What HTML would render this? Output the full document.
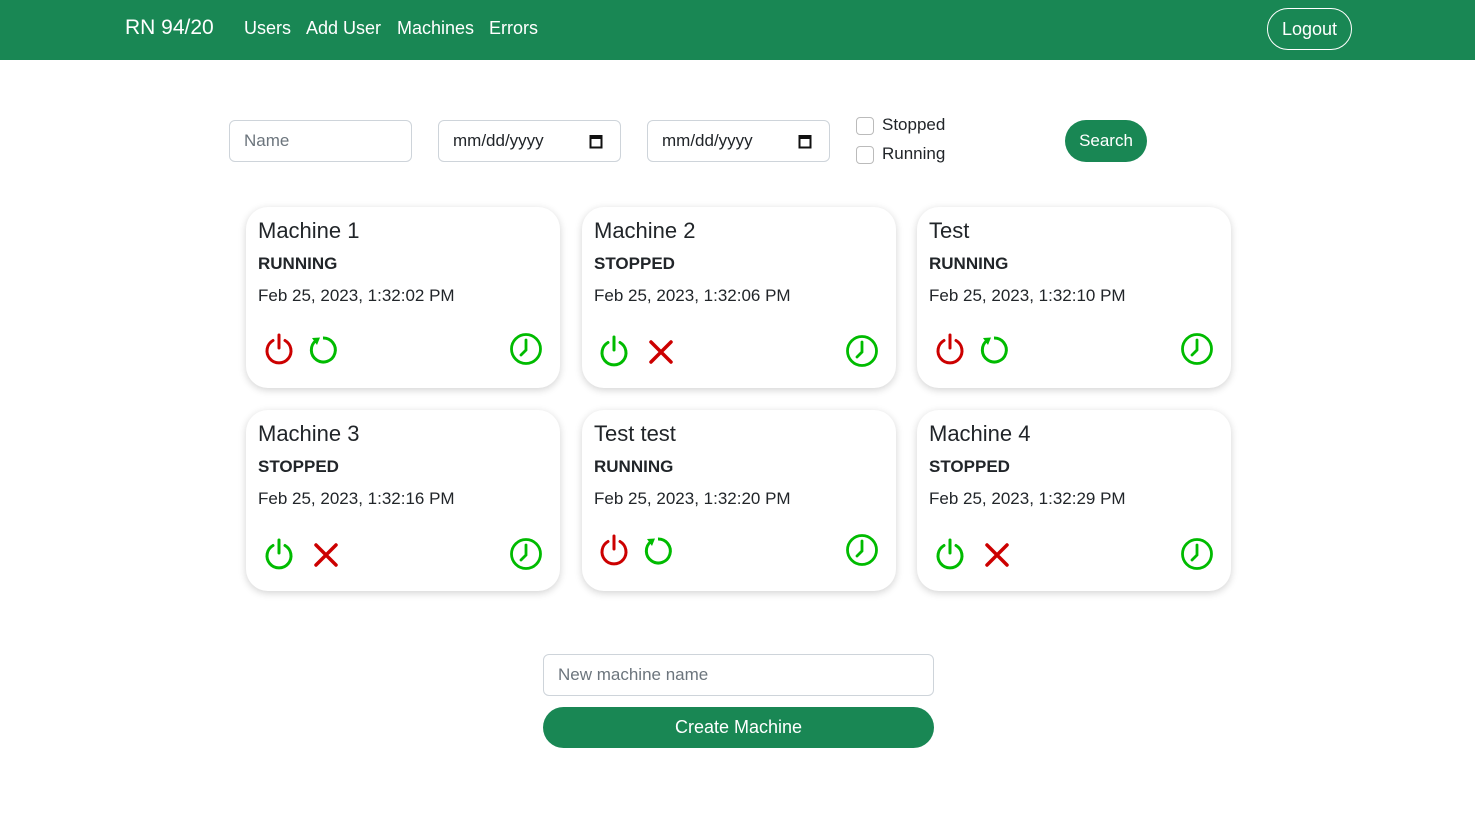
<!DOCTYPE html>
<html><head><meta charset="utf-8"><style>
*{box-sizing:border-box;margin:0;padding:0}
body{width:1475px;height:835px;background:#fff;font-family:"Liberation Sans","DejaVu Sans",sans-serif;color:#212529;position:relative;overflow:hidden}
.nav{position:absolute;left:0;top:0;width:1475px;height:60px;background:#198754;color:#fff}
.nav span{position:absolute;top:18px;font-size:18px}
.brand{left:125px;top:16px!important;font-size:21px!important}
.logout{position:absolute;left:1267px;top:8px;width:85px;height:42px;border:1px solid #fff;border-radius:21px;color:#fff;font-size:18px;text-align:center;line-height:40px}
.inp{position:absolute;top:120px;width:183px;height:42px;border:1px solid #ced4da;border-radius:6px;font-size:17px;line-height:40px;padding-left:14px}
.cb{position:absolute;left:856px;width:18px;height:18px;border:1px solid #bbb;border-radius:4px}
.cbl{position:absolute;left:882px;font-size:17px}
.search{position:absolute;left:1065px;top:120px;width:82px;height:42px;border-radius:21px;background:#198754;color:#fff;font-size:17px;text-align:center;line-height:42px}
.card{position:absolute;width:314px;height:181px;border-radius:22px;box-shadow:0 2px 8px rgba(0,0,0,.18);background:#fff}
.card h3{position:absolute;left:12px;top:11px;font-size:22px;font-weight:normal}
.card .st{position:absolute;left:12px;top:47px;font-size:17px;font-weight:bold}
.card .dt{position:absolute;left:12px;top:79px;font-size:17px}
.card svg{position:absolute}
.new{position:absolute;left:543px;top:654px;width:391px;height:42px;border:1px solid #ced4da;border-radius:6px;font-size:17px;line-height:40px;padding-left:14px;color:#6c757d}
.create{position:absolute;left:543px;top:707px;width:391px;height:41px;border-radius:21px;background:#198754;color:#fff;font-size:18px;text-align:center;line-height:41px}
</style></head><body>
<div class="nav">
<span class="brand">RN 94/20</span>
<span style="left:244px">Users</span>
<span style="left:306px">Add User</span>
<span style="left:397px">Machines</span>
<span style="left:489px">Errors</span>
<div class="logout">Logout</div>
</div>
<div class="inp" style="left:229px;color:#6c757d">Name</div>
<div class="inp" style="left:438px">mm/dd/yyyy<svg style="position:absolute;left:150px;top:12px" width="14" height="16" viewBox="0 0 14 16"><rect x="1.5" y="3" width="11" height="11.5" fill="none" stroke="#111" stroke-width="2"/><rect x="1.5" y="3" width="11" height="3" fill="#111"/></svg></div>
<div class="inp" style="left:647px">mm/dd/yyyy<svg style="position:absolute;left:150px;top:12px" width="14" height="16" viewBox="0 0 14 16"><rect x="1.5" y="3" width="11" height="11.5" fill="none" stroke="#111" stroke-width="2"/><rect x="1.5" y="3" width="11" height="3" fill="#111"/></svg></div>
<div class="cb" style="top:117px"></div><div class="cbl" style="top:115px">Stopped</div>
<div class="cb" style="top:146px"></div><div class="cbl" style="top:144px">Running</div>
<div class="search">Search</div>

<svg width="0" height="0" style="position:absolute">
<defs>
<g id="pw"><path d="M10 7.5 A12 12 0 1 0 22 7.5" fill="none" stroke-width="3" stroke-linecap="round"/><line x1="16" y1="2" x2="16" y2="15" stroke-width="3" stroke-linecap="round"/></g>
<g id="rf"><path d="M9 6.5 A12 12 0 1 0 16 4" fill="none" stroke="#0b0" stroke-width="3"/><path d="M5 4 L13 3.5 L10 11 Z" fill="#0b0"/></g>
<g id="x"><path d="M6 6 L26 26 M26 6 L6 26" stroke="#c00" stroke-width="3.5" stroke-linecap="round"/></g>
<g id="ck"><circle cx="16" cy="16" r="14.5" fill="none" stroke="#0b0" stroke-width="2.8"/><path d="M16 7 L16 17 L11 22" fill="none" stroke="#0b0" stroke-width="2.8" stroke-linecap="round"/></g>
</defs></svg>

<div class="card" style="left:246px;top:207px"><h3>Machine 1</h3><div class="st">RUNNING</div><div class="dt">Feb 25, 2023, 1:32:02 PM</div>
<svg style="left:17px;top:126px" width="32" height="32"><use href="#pw" stroke="#c00"/></svg>
<svg style="left:61px;top:127px" width="32" height="32"><use href="#rf"/></svg>
<svg style="left:264px;top:126px" width="33" height="33"><use href="#ck"/></svg></div>

<div class="card" style="left:582px;top:207px"><h3>Machine 2</h3><div class="st">STOPPED</div><div class="dt">Feb 25, 2023, 1:32:06 PM</div>
<svg style="left:16px;top:128px" width="32" height="32"><use href="#pw" stroke="#0b0"/></svg>
<svg style="left:63px;top:129px" width="32" height="32"><use href="#x"/></svg>
<svg style="left:264px;top:128px" width="33" height="33"><use href="#ck"/></svg></div>

<div class="card" style="left:917px;top:207px"><h3>Test</h3><div class="st">RUNNING</div><div class="dt">Feb 25, 2023, 1:32:10 PM</div>
<svg style="left:17px;top:126px" width="32" height="32"><use href="#pw" stroke="#c00"/></svg>
<svg style="left:61px;top:127px" width="32" height="32"><use href="#rf"/></svg>
<svg style="left:264px;top:126px" width="33" height="33"><use href="#ck"/></svg></div>

<div class="card" style="left:246px;top:410px"><h3>Machine 3</h3><div class="st">STOPPED</div><div class="dt">Feb 25, 2023, 1:32:16 PM</div>
<svg style="left:17px;top:128px" width="32" height="32"><use href="#pw" stroke="#0b0"/></svg>
<svg style="left:64px;top:129px" width="32" height="32"><use href="#x"/></svg>
<svg style="left:264px;top:128px" width="33" height="33"><use href="#ck"/></svg></div>

<div class="card" style="left:582px;top:410px"><h3>Test test</h3><div class="st">RUNNING</div><div class="dt">Feb 25, 2023, 1:32:20 PM</div>
<svg style="left:16px;top:124px" width="32" height="32"><use href="#pw" stroke="#c00"/></svg>
<svg style="left:60px;top:125px" width="32" height="32"><use href="#rf"/></svg>
<svg style="left:264px;top:124px" width="33" height="33"><use href="#ck"/></svg></div>

<div class="card" style="left:917px;top:410px"><h3>Machine 4</h3><div class="st">STOPPED</div><div class="dt">Feb 25, 2023, 1:32:29 PM</div>
<svg style="left:17px;top:128px" width="32" height="32"><use href="#pw" stroke="#0b0"/></svg>
<svg style="left:64px;top:129px" width="32" height="32"><use href="#x"/></svg>
<svg style="left:264px;top:128px" width="33" height="33"><use href="#ck"/></svg></div>

<div class="new">New machine name</div>
<div class="create">Create Machine</div>
</body></html>
